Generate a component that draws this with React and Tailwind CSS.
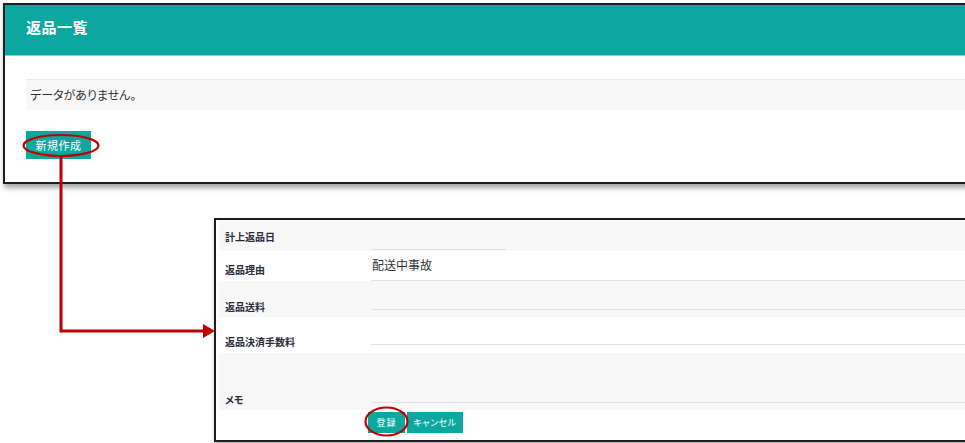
import React from "react";

const jp = "font-['Meiryo','Noto_Sans_CJK_JP',sans-serif]";

function Row({ bg, h, label, pb, labelShift }) {
  return (
    <div className={`flex items-end ${bg}`} style={{ height: h, paddingBottom: pb }}>
      <div
        className="w-[152px] shrink-0 pl-[6px] text-[10px] font-bold leading-[12px] text-[#2b2b3a]"
        style={{ marginBottom: labelShift }}
      >
        {label}
      </div>
      <div className="h-[24px] flex-1 border-b border-[#e2e2e2]" />
    </div>
  );
}

export default function App() {
  return (
    <div className={`relative h-[443px] w-[965px] overflow-hidden bg-white ${jp} [font-feature-settings:'palt']`}>
      <div className="pl-[3px] pt-[3px]">
        <div className="w-[1000px] border-2 border-[#1e1e1e] bg-white shadow-[1px_4px_5px_rgba(0,0,0,0.35)]">
          <div className="flex h-[51px] items-center border-b border-[#7fd3ce] bg-[#0ca8a0] pb-[5px] pl-[21px]">
            <h1 className="text-[15px] font-bold tracking-[0.5px] text-white">返品一覧</h1>
          </div>
          <div className="pb-[23px] pl-[21px] pt-[23px]">
            <div className="flex h-[31px] items-center border-t border-[#ececec] bg-[#f8f8f8] pl-[4px] text-[12px] text-[#333]">
              データがありません。
            </div>
            <button className="mt-[21px] flex h-[28px] w-[65px] items-center justify-center bg-[#0ca8a0] text-[11px] tracking-[0.5px] text-white">
              新規作成
            </button>
          </div>
        </div>
      </div>

      <div className="ml-[214px] mt-[34px] w-[800px] border-2 border-[#1e1e1e] bg-white pl-[3px] shadow-[1px_3px_4px_rgba(0,0,0,0.3)]">
        <div className="flex h-[31px] items-stretch bg-[#f8f8f8]">
          <div className="flex w-[152px] shrink-0 items-center pl-[6px] pt-[3px] text-[10px] font-bold leading-[12px] text-[#2b2b3a]">
            計上返品日
          </div>
          <div className="mb-[1px] w-[135px] border-b border-[#e2e2e2]" />
        </div>
        <div className="flex h-[30px] items-stretch bg-white">
          <div className="flex w-[152px] shrink-0 items-center pl-[6px] pt-[7px] text-[10px] font-bold leading-[12px] text-[#2b2b3a]">
            返品理由
          </div>
          <div className="flex flex-1 items-center border-b border-[#e2e2e2] pb-[2px] pl-[1px] text-[12px] text-[#333]">
            配送中事故
          </div>
        </div>
        <Row bg="bg-[#f8f8f8]" h={36} pb={7} labelShift={-3} label="返品送料" />
        <Row bg="bg-white" h={36} pb={8} labelShift={-3} label="返品決済手数料" />
        <Row bg="bg-[#f8f8f8]" h={57} pb={7} labelShift={-3} label="メモ" />
        <div className="flex h-[30px] gap-[2px] bg-white pl-[149px] pt-[2px]">
          <button className="flex h-[21px] w-[37px] items-center justify-center bg-[#0ca8a0] text-[9px] tracking-[1px] text-white">
            登録
          </button>
          <button className="flex h-[21px] w-[56px] items-center justify-center bg-[#0ca8a0] text-[9px] tracking-[0.5px] text-white">
            キャンセル
          </button>
        </div>
      </div>

      <svg
        className="pointer-events-none absolute left-0 top-0"
        width="965"
        height="443"
        viewBox="0 0 965 443"
      >
        <polyline points="61,156 61,331 204,331" fill="none" stroke="#c00000" strokeWidth="3" />
        <polygon points="203,324 215,331 203,338" fill="#c00000" />
        <ellipse cx="61" cy="145.5" rx="37.5" ry="10.5" fill="none" stroke="#c00000" strokeWidth="2.2" />
        <ellipse cx="386.5" cy="421.5" rx="21" ry="14" fill="none" stroke="#c00000" strokeWidth="2.2" />
      </svg>
    </div>
  );
}
